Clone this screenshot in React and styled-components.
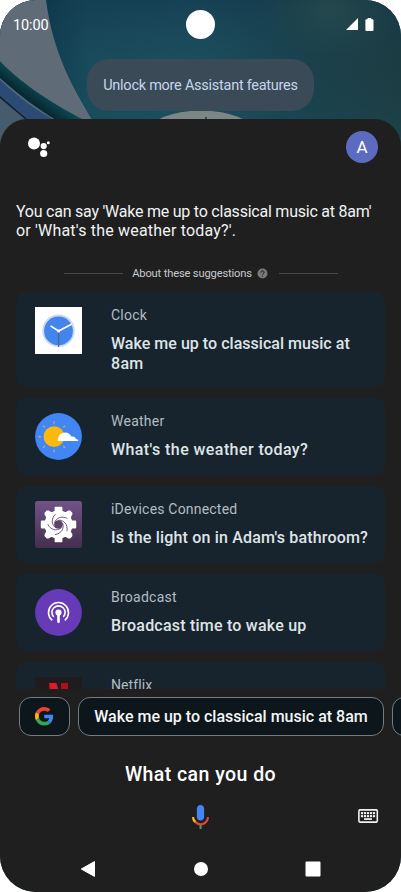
import React from "react";
import styled, {createGlobalStyle} from "styled-components";

/* GLOBAL STYLES */

const GlobalStyle = createGlobalStyle`
    * {
        box-sizing: border-box;
    }
    body {
        margin: 0;
        background: #ffffff;
        font-family: Roboto, "Liberation Sans", sans-serif;
    }
`

/* STYLED COMPONENTS USED FOR THE PAGE. */

const Phone = styled.div`
    position: relative;
    width: 401px;
    height: 892px;
    border-radius: 36px;
    overflow: hidden;
    display: flex;
    flex-direction: column;
    background: #1d4853;
`

const Wallpaper = styled.svg`
    position: absolute;
    top: 0;
    left: 0;
`

const TopArea = styled.div`
    position: relative;
    height: 119px;
    flex: none;
    display: flex;
    flex-direction: column;
    align-items: center;
`

const StatusBar = styled.div`
    width: 100%;
    height: 58px;
    padding: 10px 13px 0;
    display: grid;
    grid-template-columns: 1fr 29px 1fr;
    align-items: start;
`

const Time = styled.div`
    color: #ffffff;
    font-size: 14.5px;
    line-height: 31px;
    letter-spacing: -0.1px;
`

const Camera = styled.div`
    width: 29px;
    height: 29px;
    border-radius: 50%;
    background: #ffffff;
`

const StatusIcons = styled.div`
    display: flex;
    justify-content: flex-end;
    gap: 7px;
    padding: 8px 14px 0 0;
`

const Toast = styled.div`
    width: 227px;
    height: 52px;
    margin-top: 1px;
    border-radius: 22px;
    background: #3a4a56;
    color: #c3d7ea;
    font-size: 14.5px;
    line-height: 53px;
    text-align: center;
    white-space: nowrap;
    letter-spacing: ${props => props.$spacing}px;
`

const Sheet = styled.div`
    position: relative;
    flex: 1;
    min-height: 0;
    display: flex;
    flex-direction: column;
    border-radius: 27px 27px 0 0;
    background: #1f1f1f;
`

const SheetHeader = styled.div`
    height: 83px;
    padding: 12px 23px 0 26px;
    display: flex;
    justify-content: space-between;
    align-items: flex-start;
`

const Avatar = styled.div`
    width: 32px;
    height: 32px;
    border-radius: 50%;
    background: #5c6bc0;
    color: #ffffff;
    font-size: 17px;
    line-height: 33px;
    text-align: center;
`

const Hint = styled.div`
    height: 64px;
    padding-left: 16px;
    color: #f1f3f4;
    font-size: 16px;
    line-height: 19px;
    white-space: nowrap;
`

const Line = styled.div`
    letter-spacing: ${props => props.$spacing || 0}px;
`

const About = styled.div`
    height: 14px;
    padding: 0 63px 0 64px;
    display: flex;
    align-items: center;
    color: #c8cacd;
    font-size: 11.2px;
    white-space: nowrap;
    letter-spacing: ${props => props.$spacing}px;
`

const Rule = styled.div`
    flex: 1;
    height: 1px;
    background: #47494b;
`

const AboutLabel = styled.div`
    display: flex;
    align-items: center;
    gap: 5px;
    padding: 0 11px 0 9px;
`

const CardList = styled.div`
    height: 409px;
    padding: 12px 16px 0;
    overflow: hidden;
    display: flex;
    flex-direction: column;
    gap: 11px;
`

const Card = styled.div`
    flex: none;
    height: ${props => props.$tall ? 95 : 77}px;
    padding: 15px 0 0 19px;
    border-radius: 10px;
    display: flex;
    gap: 29px;
    background: #18242d;
    white-space: nowrap;
`

const CardIcon = styled.svg`
    width: 47px;
    height: 47px;
    flex: none;
`

const CardName = styled.div`
    color: #b3bcc4;
    font-size: 14px;
    line-height: 16px;
    letter-spacing: ${props => props.$spacing || 0}px;
`

const CardText = styled.div`
    margin-top: 11px;
    color: #dfe4e8;
    font-size: 16px;
    font-weight: 500;
    line-height: 20px;
`

const ChipRow = styled.div`
    height: 55px;
    padding: 8px 0 0 19px;
    display: flex;
    gap: 8px;
    overflow: hidden;
`

const Chip = styled.div`
    flex: none;
    width: ${props => props.$width}px;
    height: 39px;
    border: 1px solid #737c81;
    border-radius: 12px;
    display: flex;
    align-items: center;
    justify-content: center;
    background: #0d161b;
    color: #f4f6f7;
    font-size: 16px;
    font-weight: 500;
    white-space: nowrap;
    letter-spacing: ${props => props.$spacing || 0}px;
`

const Query = styled.div`
    height: 50px;
    padding-top: 19px;
    color: #ffffff;
    font-size: 19.5px;
    font-weight: 500;
    line-height: 24px;
    text-align: center;
    letter-spacing: ${props => props.$spacing}px;
`

const InputBar = styled.div`
    height: 56px;
    padding: 8px 22px 0;
    display: grid;
    grid-template-columns: 1fr 29px 1fr;
`

const KeyboardIcon = styled.svg`
    justify-self: end;
    margin-top: 7px;
`

const NavBar = styled.div`
    padding: 10px 80px 0 80px;
    display: flex;
    justify-content: space-between;
`

function WallpaperArt() {
    return (
        <Wallpaper width="401" height="150" viewBox="0 0 401 150">
            <defs>
                <linearGradient id="wallBase" x1="0" y1="0" x2="1" y2="0">
                    <stop offset="0.1" stopColor="#0d3a4c" />
                    <stop offset="0.22" stopColor="#184b5b" />
                    <stop offset="0.5" stopColor="#1c4e5e" />
                    <stop offset="0.75" stopColor="#1a414d" />
                    <stop offset="1" stopColor="#1d3c41" />
                </linearGradient>
                <linearGradient id="wallShade" x1="0" y1="0" x2="0" y2="1">
                    <stop offset="0" stopColor="#12344a" stopOpacity="0.5" />
                    <stop offset="0.4" stopColor="#153c50" stopOpacity="0" />
                    <stop offset="1" stopColor="#1f6a70" stopOpacity="0.2" />
                </linearGradient>
                <radialGradient id="wallGlow">
                    <stop offset="0" stopColor="#2b504c" stopOpacity="0.6" />
                    <stop offset="1" stopColor="#2b504c" stopOpacity="0" />
                </radialGradient>
                <linearGradient id="wallTeal" x1="22" y1="96" x2="36" y2="77" gradientUnits="userSpaceOnUse">
                    <stop offset="0" stopColor="#06262f" />
                    <stop offset="0.5" stopColor="#0b3f4a" />
                    <stop offset="1" stopColor="#15626e" />
                </linearGradient>
            </defs>
            <rect width="401" height="150" fill="url(#wallBase)" />
            <rect width="401" height="150" fill="url(#wallShade)" />
            <ellipse cx="330" cy="10" rx="70" ry="50" fill="url(#wallGlow)" />
            <path d="M0 0H46C49 24 55 45 64 67C72 86 82 103 92 120H0Z" fill="#5f6c78" />
            <path d="M0 61C20 82 46 100 84 120V150H0Z" fill="url(#wallTeal)" />
            <path d="M0 78C20 96 38 109 56 120V150H0Z" fill="#50697a" />
            <path d="M0 80C18 97 36 110 54 120V150H0Z" fill="#2b4a74" />
            <path d="M0 96L28 120V150H0Z" fill="#0f1d2c" />
            <path d="M0 98L26 120V150H0Z" fill="#465c6d" />
            <ellipse cx="201" cy="133" rx="53" ry="22.5" fill="#7b8685" />
            <path d="M205 117h2v3h-2z" fill="#3b4a4c" />
        </Wallpaper>
    )
}

function ClockIcon() {
    return (
        <CardIcon viewBox="0 0 47 47">
            <rect width="47" height="47" fill="#ffffff" />
            <circle cx="23.5" cy="23.7" r="16.2" fill="#c9d8ea" />
            <circle cx="23.5" cy="23.9" r="14.4" fill="#4384ed" />
            <path d="M23.6 24V39.8" stroke="#47649b" strokeWidth="1.3" />
            <path d="M15.5 18.9L23.6 24L37 16.9" stroke="#ffffff" strokeWidth="1.7" fill="none" />
            <circle cx="23.6" cy="24" r="1.6" fill="#ffffff" />
        </CardIcon>
    )
}

function WeatherIcon() {
    return (
        <CardIcon viewBox="0 0 47 47">
            <circle cx="23.5" cy="23.5" r="23.4" fill="#4285f4" />
            {[45, 90, 135, 180, 225, 270, 315].map(angle => (
                <path key={angle} d="M32 23.7h2.5" stroke="#a9ad90" strokeWidth="1.4"
                      transform={`rotate(${angle} 19 23.7)`} />
            ))}
            <circle cx="19" cy="23.7" r="10.4" fill="#fbb90d" />
            <path d="M22.8 28C22.5 23.4 25.8 19.5 30 19.5C33.4 19.5 35.4 21.5 36.4 23.6C39 23 40.6 24.3 41 26C42.4 26 43.2 26.8 43.3 28Z"
                  fill="#ffffff" />
        </CardIcon>
    )
}

function DevicesIcon() {
    return (
        <CardIcon viewBox="0 0 47 47">
            <defs>
                <linearGradient id="devicesBg" x1="0" y1="0" x2="0" y2="1">
                    <stop offset="0" stopColor="#735288" />
                    <stop offset="1" stopColor="#422f4d" />
                </linearGradient>
            </defs>
            <rect width="47" height="47" rx="2.5" fill="url(#devicesBg)" />
            <circle cx="23.5" cy="23.5" r="14" fill="#ffffff" />
            {[0, 90, 180, 270].map(angle => (
                <g key={angle} transform={`rotate(${angle} 23.5 23.5)`}>
                    <path d="M17 13L19.6 9.8V6.6q0-.8.8-.8h6.2q.8 0 .8.8V9.8L30 13Z" fill="#ffffff" />
                    <path d="M26 12L31.5 10.8C33 9 36 9.3 36.2 10.8C37.7 11 38 14 36.2 15.5L35 21Z" fill="#ffffff" />
                </g>
            ))}
            <circle cx="23.5" cy="23.5" r="4.3" fill="#5b426b" />
            {[10, 82, 154, 226, 298].map(angle => (
                <path key={angle} d="M19.2 23.2C19.6 17.4 25 14 31.2 16" stroke="#5d436d" strokeWidth="0.8"
                      fill="none" transform={`rotate(${angle} 23.5 23.5)`} />
            ))}
        </CardIcon>
    )
}

function BroadcastIcon() {
    return (
        <CardIcon viewBox="0 0 47 47">
            <circle cx="23.5" cy="23.5" r="23.4" fill="#673ab7" />
            <g fill="none" stroke="#ffffff" strokeWidth="1.6">
                <path d="M18.7 28A6.6 6.6 0 1 1 28.3 28" />
                <path d="M17.2 31.3A10 10 0 1 1 29.8 31.3" />
            </g>
            <circle cx="23.5" cy="23.6" r="3.1" fill="#ffffff" />
            <path d="M23.5 24V32.8" stroke="#ffffff" strokeWidth="2.6" strokeLinecap="round" />
        </CardIcon>
    )
}

function NetflixIcon() {
    return (
        <CardIcon viewBox="0 0 47 47">
            <rect width="47" height="47" fill="#201c1d" />
            <path d="M14 6h7v35h-7zM26 6h7v35h-7z" fill="#b0101a" />
            <path d="M14 6h7.3L33 41h-7.3Z" fill="#e01b24" />
        </CardIcon>
    )
}

function AssistantLogo() {
    return (
        <svg width="26" height="30" viewBox="0 0 26 30">
            <g fill="#ffffff">
                <circle cx="8" cy="12.4" r="6" />
                <circle cx="17.7" cy="15.1" r="3.1" />
                <circle cx="17.7" cy="22.5" r="3.6" />
                <circle cx="22.3" cy="11.7" r="1.5" />
            </g>
        </svg>
    )
}

function GoogleLogo() {
    return (
        <svg width="18.5" height="18.5" viewBox="0 0 48 48">
            <path fill="#ea4335" d="M24 9.5c3.54 0 6.71 1.22 9.21 3.6l6.85-6.85C35.9 2.38 30.47 0 24 0 14.62 0 6.51 5.38 2.56 13.22l7.98 6.19C12.43 13.72 17.74 9.5 24 9.5z" />
            <path fill="#4285f4" d="M46.98 24.55c0-1.57-.15-3.09-.38-4.55H24v9.02h12.94c-.58 2.96-2.26 5.48-4.78 7.18l7.73 6c4.51-4.18 7.09-10.36 7.09-17.65z" />
            <path fill="#fbbc05" d="M10.53 28.59c-.48-1.45-.76-2.99-.76-4.59s.27-3.14.76-4.59l-7.98-6.19C.92 16.46 0 20.12 0 24c0 3.88.92 7.54 2.56 10.78l7.97-6.19z" />
            <path fill="#34a853" d="M24 48c6.48 0 11.93-2.13 15.89-5.81l-7.73-6c-2.15 1.45-4.92 2.3-8.16 2.3-6.26 0-11.57-4.22-13.47-9.91l-7.98 6.19C6.51 42.62 14.62 48 24 48z" />
        </svg>
    )
}

const suggestions = [
    {name: "Clock", icon: ClockIcon, spacing: 0.25, lines: [["Wake me up to classical music at", 0.03], ["8am", 0.3]]},
    {name: "Weather", icon: WeatherIcon, spacing: 0.25, lines: [["What's the weather today?", 0.42]]},
    {name: "iDevices Connected", icon: DevicesIcon, spacing: 0.2, lines: [["Is the light on in Adam's bathroom?", 0.18]]},
    {name: "Broadcast", icon: BroadcastIcon, spacing: 0.25, lines: [["Broadcast time to wake up", 0.22]]},
    {name: "Netflix", icon: NetflixIcon, spacing: 0.1, lines: []},
]

// Assistant sheet opened over the home screen.
export default function App() {
    return (
        <>
            <GlobalStyle />
            <Phone>
                <WallpaperArt />
                <TopArea>
                    <StatusBar>
                        <Time>10:00</Time>
                        <Camera />
                        <StatusIcons>
                            <svg width="12" height="12" viewBox="0 0 12 12">
                                <path d="M12 0V12H0Z" fill="#ffffff" />
                            </svg>
                            <svg width="9" height="13" viewBox="0 0 9 13">
                                <path d="M2.6 0h3.6v1.2h1.3q1 0 1 1V12q0 1-1 1H1.4q-1 0-1-1V2.2q0-1 1-1h1.2Z" fill="#ffffff" />
                            </svg>
                        </StatusIcons>
                    </StatusBar>
                    <Toast $spacing={-0.26}>Unlock more Assistant features</Toast>
                </TopArea>
                <Sheet>
                    <SheetHeader>
                        <AssistantLogo />
                        <Avatar>A</Avatar>
                    </SheetHeader>
                    <Hint>
                        <Line $spacing={-0.23}>You can say 'Wake me up to classical music at 8am'</Line>
                        <Line $spacing={0.19}>or 'What's the weather today?'.</Line>
                    </Hint>
                    <About $spacing={-0.18}>
                        <Rule />
                        <AboutLabel>
                            <span>About these suggestions</span>
                            <svg width="11" height="11" viewBox="0 0 11 11">
                                <circle cx="5.5" cy="5.5" r="5" fill="#77797b" />
                                <path d="M3.9 4.5a1.6 1.6 0 1 1 2.4 1.3q-.8.5-.8 1.1M5.5 7.7v1" stroke="#1f1f1f" fill="none" />
                            </svg>
                        </AboutLabel>
                        <Rule />
                    </About>
                    <CardList>
                        {suggestions.map(item => (
                            <Card key={item.name} $tall={item.lines.length > 1}>
                                <item.icon />
                                <div>
                                    <CardName $spacing={item.spacing}>{item.name}</CardName>
                                    <CardText>
                                        {item.lines.map(([text, spacing]) => (
                                            <Line key={text} $spacing={spacing}>{text}</Line>
                                        ))}
                                    </CardText>
                                </div>
                            </Card>
                        ))}
                    </CardList>
                    <ChipRow>
                        <Chip $width={51}><GoogleLogo /></Chip>
                        <Chip $width={306} $spacing={0}>Wake me up to classical music at 8am</Chip>
                        <Chip $width={120} />
                    </ChipRow>
                    <Query $spacing={0.45}>What can you do</Query>
                    <InputBar>
                        <span />
                        <svg width="29" height="29" viewBox="0 -0.4 24 24">
                            <path fill="#4285f4" d="m12 15c1.66 0 3-1.31 3-2.97v-7.02c0-1.66-1.34-3.01-3-3.01s-3 1.34-3 3.01v7.02c0 1.66 1.34 2.97 3 2.97z" />
                            <path fill="#34a853" d="m11.2 18.08h1.7v3.92h-1.7z" />
                            <path fill="#fbbc05" d="m7.05 16.87c-1.27-1.33-2.05-2.83-2.05-4.87h1.7c0 1.45 0.86 2.42 1.77 3.38v0.32l-1.15 1.18z" />
                            <path fill="#ea4335" d="m12 17.2a4.97 5.25 0 0 1-3.54-1.82l-1.41 1.49c1.26 1.34 3.02 2.13 4.95 2.13 3.87 0 6.99-2.92 6.99-7h-1.7c0 2.92-2.53 5.2-5.29 5.2z" />
                        </svg>
                        <KeyboardIcon width="21" height="14" viewBox="0 0 21 14">
                            <rect x="0.9" y="0.9" width="18.4" height="12.2" rx="1" fill="none" stroke="#f1f1f1" strokeWidth="1.6" />
                            <g fill="#f1f1f1">
                                {[2.9, 5.9, 8.9, 11.9, 14.9].map(x => (
                                    <g key={x}>
                                        <rect x={x} y="3.1" width="2.2" height="2.1" />
                                        <rect x={x} y="6.1" width="2.2" height="2.1" />
                                    </g>
                                ))}
                                <rect x="6" y="9.2" width="8" height="1.7" />
                            </g>
                        </KeyboardIcon>
                    </InputBar>
                    <NavBar>
                        <svg width="16" height="18" viewBox="0 0 16 18">
                            <path d="M1.3 9L14.5 1.6V16.4Z" fill="#ffffff" stroke="#ffffff" strokeLinejoin="round" />
                        </svg>
                        <svg width="18" height="18" viewBox="0 0 18 18">
                            <circle cx="9" cy="9" r="7" fill="#ffffff" />
                        </svg>
                        <svg width="16" height="18" viewBox="0 0 16 18">
                            <rect x="0.5" y="1.5" width="15" height="15" rx="1" fill="#ffffff" />
                        </svg>
                    </NavBar>
                </Sheet>
            </Phone>
        </>
    )
}
